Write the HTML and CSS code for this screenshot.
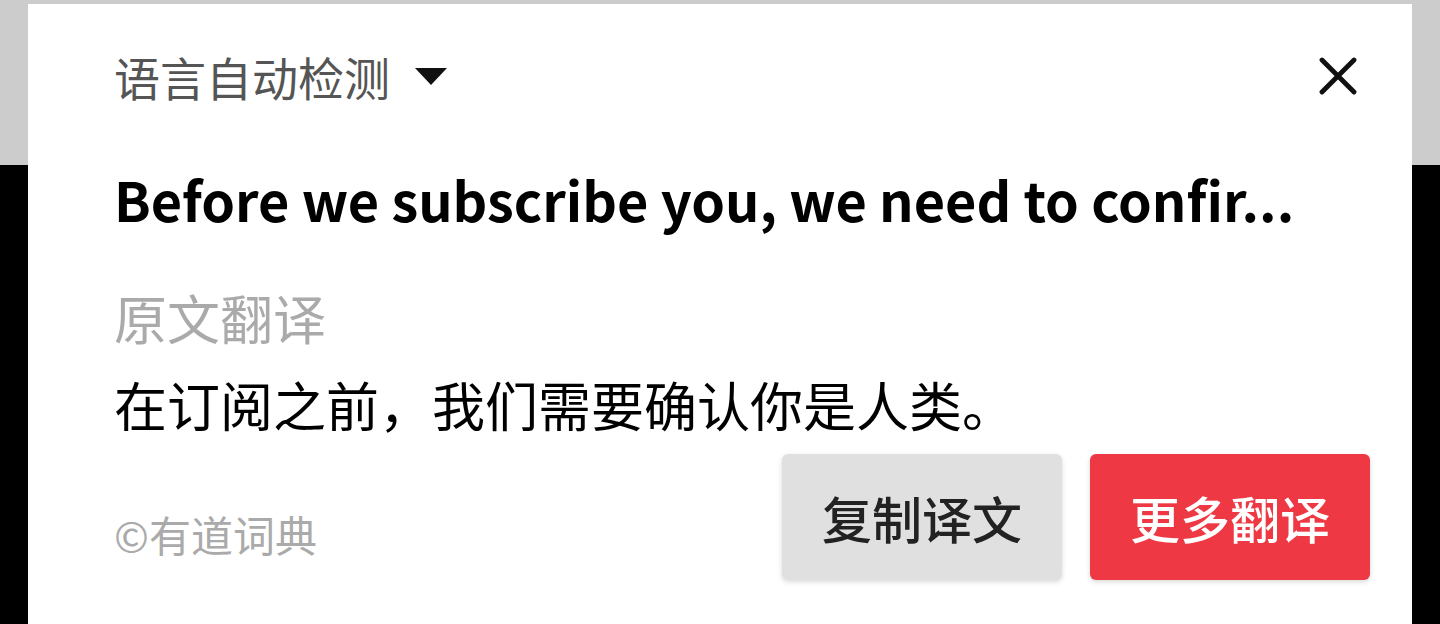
FILE: index.html
```html
<!DOCTYPE html>
<html lang="zh-CN">
<head>
  <meta charset="UTF-8" />
  <title>有道翻译</title>
  <meta name="viewport" content="width=device-width, initial-scale=1.0" />
  <link rel="stylesheet" href="styles.css">
</head>
<body>
  <div class="card">
    <div class="top">
      <div class="lang">语言自动检测 <span class="arrow"></span></div>
      <svg class="close" width="38" height="38" viewBox="0 0 38 38">
        <path d="M3 3 L35 35 M35 3 L3 35" stroke="#111" stroke-width="4.8" stroke-linecap="round" />
      </svg>
    </div>

    <h2 class="source" lang="en">Before we subscribe you, we need to confir...</h2>

    <div class="label">原文翻译</div>
    <div class="result">在订阅之前，我们需要确认你是人类。</div>

    <div class="bottom">
      <div class="credit">©有道词典</div>
      <div class="actions">
        <button type="button" class="btn copy">复制译文</button>
        <button type="button" class="btn more">更多翻译</button>
      </div>
    </div>
  </div>
</body>
</html>
```

FILE: styles.css
```css
html, body {
  margin: 0;
  height: 100%;
}
body {
  font-family: "Noto Sans CJK SC", "Noto Sans", sans-serif;
  background: linear-gradient(#cccccc 0, #cccccc 165px, #000 165px);
  overflow: hidden;
}
.card {
  margin: 4px 0 0 28px;
  width: 1384px;
  height: calc(100% - 4px);
  box-sizing: border-box;
  background: white;
  padding: 44px 42px 0 86px;
}
.top {
  display: flex;
  justify-content: space-between;
  align-items: center;
  height: 56px;
}
.lang {
  font-size: 46px;
  line-height: 56px;
  color: #555;
  display: flex;
  align-items: center;
}
.arrow {
  display: inline-block;
  width: 0;
  height: 0;
  margin-left: 25px;
  border-left: 16px solid transparent;
  border-right: 16px solid transparent;
  border-top: 17px solid #111;
}
.close {
  margin-right: 13px;
}
.source {
  margin: 60px 0 0;
  font-size: 54px;
  line-height: 70px;
  font-weight: bold;
  color: #000;
  white-space: nowrap;
}
.label {
  margin-top: 53px;
  font-size: 53px;
  line-height: 60px;
  color: #aaa;
}
.result {
  margin-top: 26px;
  font-size: 53px;
  line-height: 62px;
  color: #000;
}
.bottom {
  display: flex;
  justify-content: space-between;
  align-items: center;
  margin-top: 19px;
}
.credit {
  font-size: 42px;
  color: #aaa;
  padding-top: 32px;
}
.actions {
  display: flex;
  gap: 28px;
}
.btn {
  width: 280px;
  height: 126px;
  border: none;
  border-radius: 6px;
  font-family: inherit;
  font-size: 50px;
  font-weight: 500;
  box-shadow: 0 2px 5px rgba(0,0,0,0.15);
}
.copy {
  background: #e0e0e0;
  color: #222;
}
.more {
  background: #ee3844;
  color: white;
}
```
